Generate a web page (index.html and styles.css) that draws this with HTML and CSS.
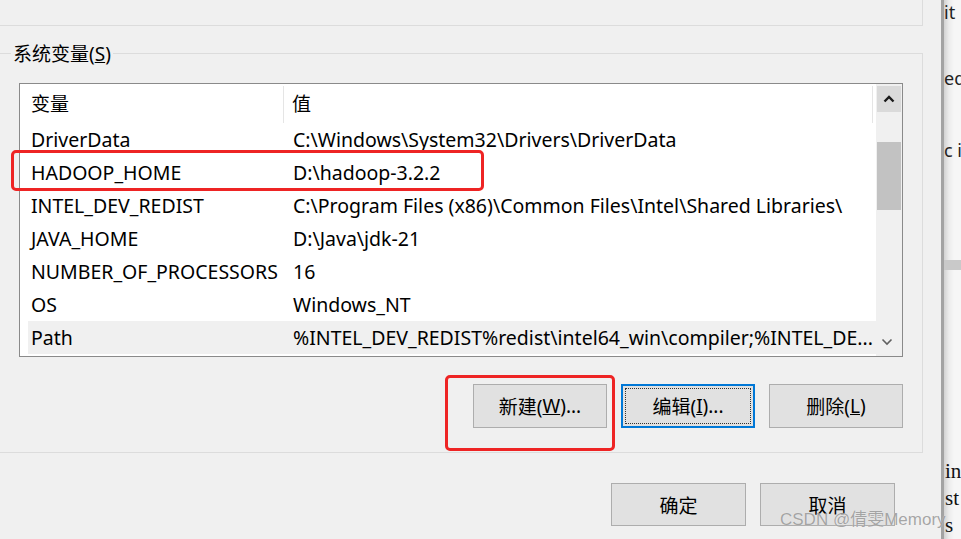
FILE: index.html
```html
<!DOCTYPE html>
<html lang="zh-CN">
<head>
<meta charset="utf-8">
<title>环境变量</title>
<link rel="stylesheet" href="styles.css">
</head>
<body>
<div class="screen">
  <div class="dialog">
    <div class="user-group"></div>
    <div class="sys-group">
      <div class="legend">系统变量(<u>S</u>)</div>
      <div class="listbox">
        <div class="list">
          <div class="list-head">
            <div class="c1">变量</div>
            <div class="c2">值</div>
          </div>
          <div class="row"><div class="c1">DriverData</div><div class="c2">C:\Windows\System32\Drivers\DriverData</div></div>
          <div class="row"><div class="c1">HADOOP_HOME</div><div class="c2">D:\hadoop-3.2.2</div></div>
          <div class="row"><div class="c1">INTEL_DEV_REDIST</div><div class="c2">C:\Program Files (x86)\Common Files\Intel\Shared Libraries\</div></div>
          <div class="row"><div class="c1">JAVA_HOME</div><div class="c2">D:\Java\jdk-21</div></div>
          <div class="row"><div class="c1">NUMBER_OF_PROCESSORS</div><div class="c2">16</div></div>
          <div class="row"><div class="c1">OS</div><div class="c2">Windows_NT</div></div>
          <div class="row row-sel"><div class="c1">Path</div><div class="c2">%INTEL_DEV_REDIST%redist\intel64_win\compiler;%INTEL_DE...</div></div>
        </div>
        <div class="scrollbar">
          <div class="sb-btn sb-up">
            <svg width="12" height="8" viewBox="0 0 12 8"><path d="M1.5 6.5 L6 2 L10.5 6.5" fill="none" stroke="#1a1a1a" stroke-width="2.4"/></svg>
          </div>
          <div class="sb-track"><div class="sb-thumb"></div></div>
          <div class="sb-btn sb-down">
            <svg width="12" height="8" viewBox="0 0 12 8"><path d="M1.5 1.5 L6 6 L10.5 1.5" fill="none" stroke="#606060" stroke-width="1.6"/></svg>
          </div>
        </div>
      </div>
      <div class="btn-row">
        <button class="btn">新建(<u>W</u>)...</button>
        <button class="btn btn-focus"><span class="focus-ring">编辑(<u>I</u>)...</span></button>
        <button class="btn">删除(<u>L</u>)</button>
      </div>
    </div>
    <div class="footer">
      <button class="btn btn-foot">确定</button>
      <button class="btn btn-foot">取消</button>
    </div>
  </div>
  <div class="side">
    <div class="side-t t-it">it</div>
    <div class="side-t t-eq">eq</div>
    <div class="side-t t-ci">c i</div>
    <div class="side-band"></div>
    <div class="side-serif">in<br>st<br>s</div>
  </div>
  <div class="mark mark-row"></div>
  <div class="mark mark-btn"></div>
  <div class="watermark">CSDN @倩雯Memory</div>
</div>
</body>
</html>
```
FILE: styles.css
```css
* { box-sizing: border-box; }
html, body { margin: 0; padding: 0; }
body {
  width: 961px;
  height: 539px;
  overflow: hidden;
  background: #f0f0f0;
  font-family: "Noto Sans", "Noto Sans CJK SC", sans-serif;
  font-size: 19px;
  color: #000;
}
.screen {
  position: relative;
  display: flex;
  width: 961px;
  height: 539px;
  overflow: hidden;
}
.dialog {
  width: 941px;
  height: 539px;
  flex: none;
  background: #f0f0f0;
  display: flex;
  flex-direction: column;
}
.user-group {
  margin-left: -4px;
  width: 927px;
  height: 26px;
  border-right: 1px solid #dcdcdc;
  border-bottom: 1px solid #dcdcdc;
}
.sys-group {
  margin-top: 27px;
  margin-left: -4px;
  width: 927px;
  height: 400px;
  border: 1px solid #dcdcdc;
  display: flex;
  flex-direction: column;
  align-items: flex-start;
}
.legend {
  margin-top: -13px;
  margin-left: 14px;
  padding: 0 2px;
  height: 26px;
  line-height: 26px;
  background: #f0f0f0;
  white-space: nowrap;
}
.listbox {
  margin-top: 16px;
  margin-left: 22px;
  width: 884px;
  height: 274px;
  border: 1px solid #8a8a8a;
  background: #fff;
  display: flex;
}
.list {
  width: 856px;
  padding-left: 8px;
  overflow: hidden;
}
.list-head, .row {
  display: flex;
  white-space: nowrap;
}
.list-head {
  height: 39px;
  line-height: 39px;
}
.row {
  height: 33px;
  line-height: 33px;
  font-size: 19.5px;
}
.c1 {
  width: 256px;
  padding-left: 3px;
  flex: none;
  overflow: hidden;
}
.c2 {
  width: 589px;
  padding-left: 9px;
  flex: none;
  overflow: hidden;
}
.list-head .c1 {
  border-right: 1px solid #e5e5e5;
  margin: 2px 0 0;
  line-height: 37px;
}
.list-head .c2 {
  border-right: 1px solid #e5e5e5;
  margin: 2px 0 0;
  line-height: 37px;
  padding-left: 8px;
}
.row-sel {
  background: #f0f0f0;
}
.scrollbar {
  width: 26px;
  flex: none;
  background: #f0f0f0;
  display: flex;
  flex-direction: column;
  padding: 2px 1px 1px 1px;
}
.sb-btn {
  height: 26px;
  flex: none;
  display: flex;
  align-items: center;
  justify-content: center;
}
.sb-up { background: #dadada; }
.sb-down { padding-right: 4px; }
.sb-track {
  flex: 1;
  padding-top: 30px;
}
.sb-thumb {
  height: 68px;
  background: #c2c2c2;
}
.btn-row {
  margin-top: 27px;
  margin-left: 22px;
  width: 884px;
  display: flex;
  justify-content: flex-end;
  gap: 14px;
}
.btn {
  width: 134px;
  height: 44px;
  background: #e1e1e1;
  border: 1px solid #adadad;
  font-family: "Noto Sans", "Noto Sans CJK SC", sans-serif;
  font-size: 19px;
  color: #000;
  padding: 0;
  display: flex;
  align-items: center;
  justify-content: center;
  white-space: nowrap;
}
.btn-focus {
  border: 2px solid #0078d7;
  padding: 2px;
}
.focus-ring {
  width: 100%;
  height: 100%;
  border: 1px dotted #333;
  display: flex;
  align-items: center;
  justify-content: center;
}
.footer {
  margin-top: 30px;
  padding-right: 46px;
  display: flex;
  justify-content: flex-end;
  gap: 14px;
}
.btn-foot {
  width: 135px;
  height: 43px;
}
.side {
  flex: 1;
  height: 539px;
  border-left: 3px solid #a3a3a3;
  background: linear-gradient(to right, #d2d2d2, #ececec 5px, #f6f6f6 10px);
  display: flex;
  flex-direction: column;
  font-family: "Noto Sans", sans-serif;
  font-size: 18px;
  color: #222;
  white-space: nowrap;
  overflow: hidden;
}
.side-t {
  height: 24px;
  line-height: 24px;
  padding-left: 0;
}
.t-it { margin-top: 0; }
.t-eq { margin-top: 42px; }
.t-ci { margin-top: 48px; }
.side-band {
  margin-top: 98px;
  height: 17px;
  background: #c9c9c9;
}
.side-serif {
  margin-top: 188px;
  font-family: "Liberation Serif", serif;
  font-size: 21px;
  line-height: 27px;
  color: #111;
  padding-left: 1px;
}
.mark {
  position: absolute;
  border: 3px solid #ee2424;
  border-radius: 5px;
  pointer-events: none;
}
.mark-row {
  left: 11px;
  top: 150px;
  width: 473px;
  height: 41px;
}
.mark-btn {
  left: 445px;
  top: 375px;
  width: 170px;
  height: 76px;
}
.watermark {
  position: absolute;
  left: 780px;
  top: 509px;
  font-family: "Liberation Sans", "Noto Sans CJK SC", sans-serif;
  font-size: 17px;
  line-height: 22px;
  color: rgba(150, 150, 150, 0.85);
  text-shadow: 0 0 1px rgba(255, 255, 255, 0.6);
  white-space: nowrap;
}
```
